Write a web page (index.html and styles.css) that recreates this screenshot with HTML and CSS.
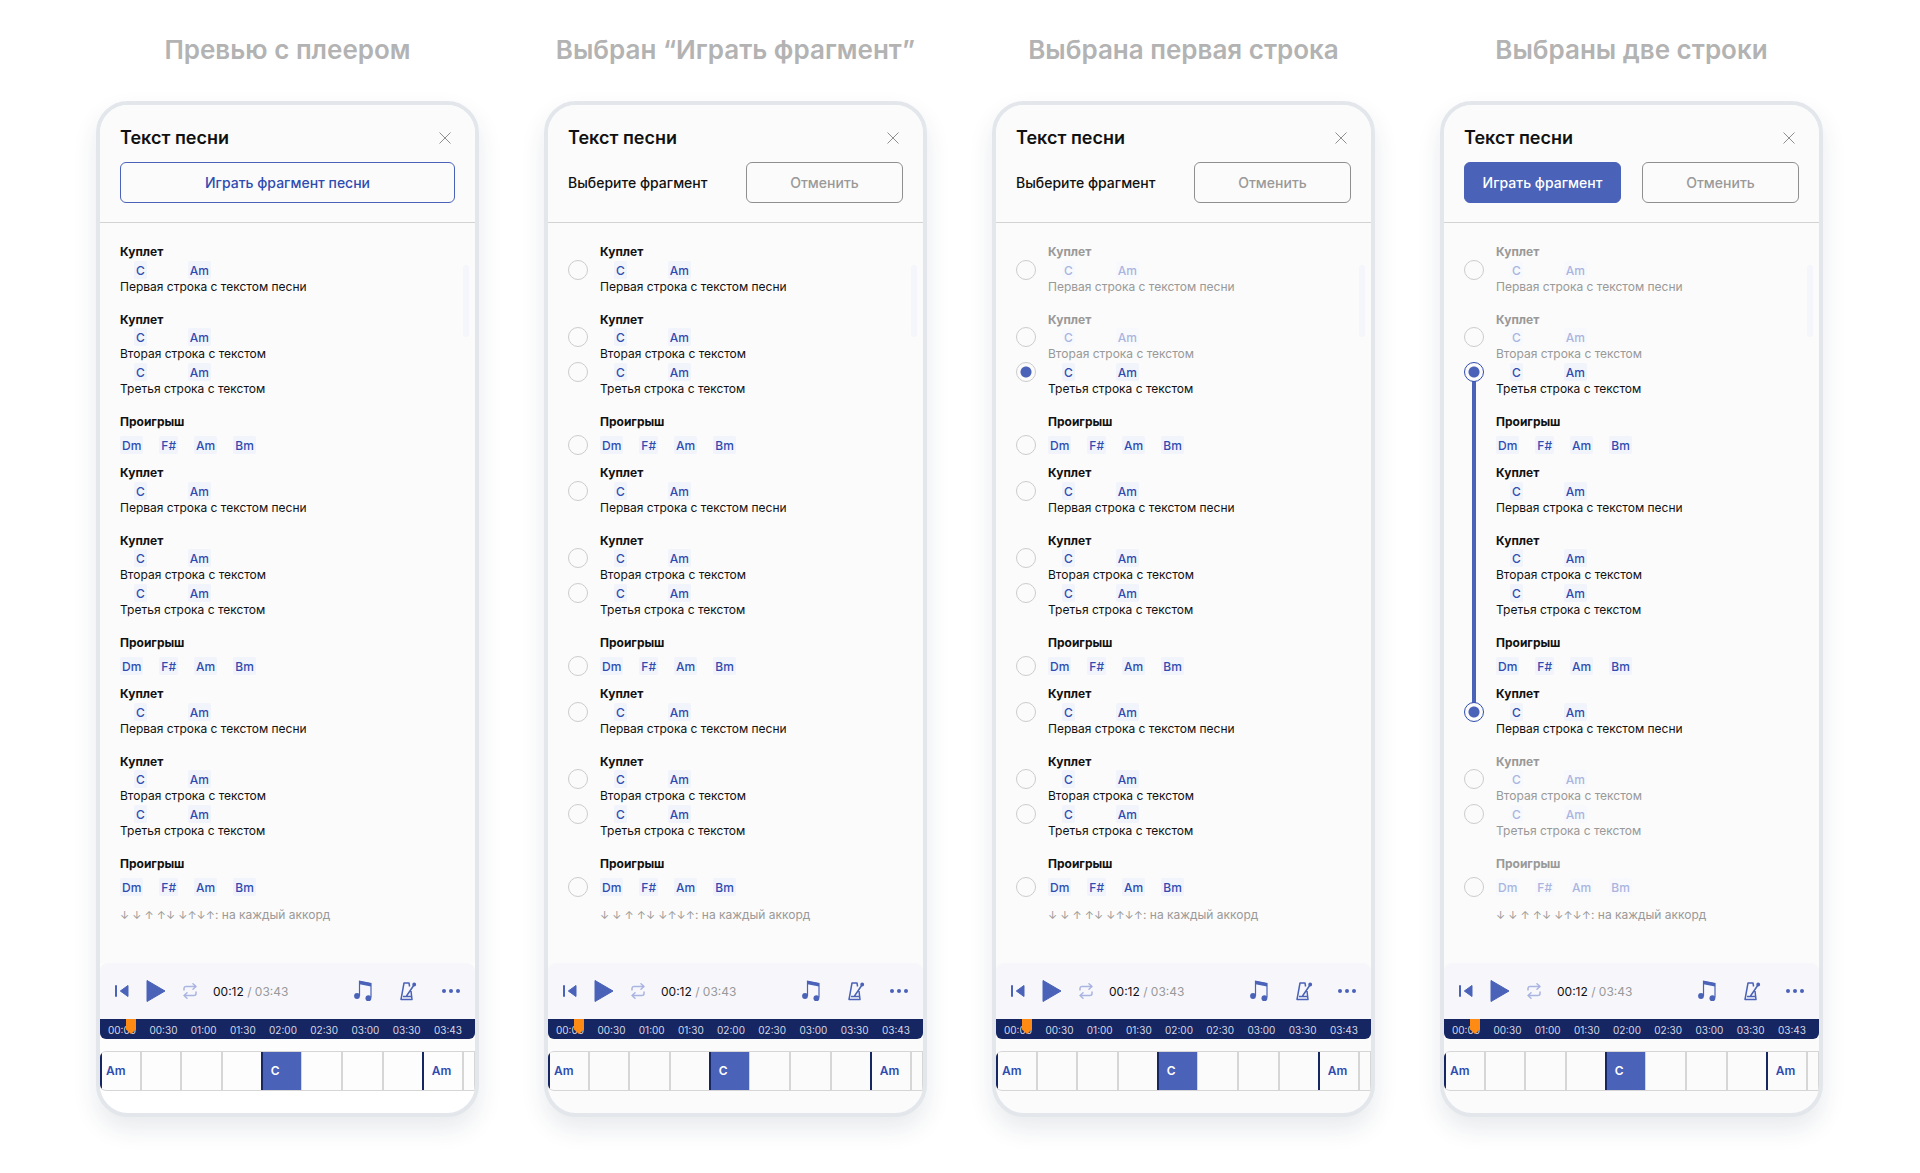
FILE: index.html
```html
<!DOCTYPE html>
<html lang="ru">
<head>
    <meta charset="UTF-8">
    <meta name="viewport" content="width=device-width, initial-scale=1.0">
    <title>Текст песни</title>
    <link rel="stylesheet" href="styles.css">
</head>
<body>
    <main class="board" id="board"></main>

    <template id="playerTemplate">
        <footer class="player">
            <div class="controls">
                <button type="button" class="icon-btn" aria-label="В начало">
                    <svg width="14" height="14" viewBox="0 0 14 14" fill="#4a62b8"><rect x="0" y="1" width="2" height="12" rx="1"/><path d="M13 1.500v11L5.300 7z" stroke="#4a62b8" stroke-linejoin="round"/></svg>
                </button>
                <button type="button" class="icon-btn" aria-label="Играть">
                    <svg width="20" height="24" viewBox="0 0 20 24" fill="#4a62b8"><path d="M1 1.500v21L19 12z" stroke="#4a62b8" stroke-linejoin="round"/></svg>
                </button>
                <button type="button" class="icon-btn" aria-label="Повтор">
                    <svg width="14" height="16" viewBox="0 0 14 16" fill="none" stroke="#a9b5e0" stroke-width="1.500" stroke-linecap="round" stroke-linejoin="round"><path d="M1 7V5.500a2 2 0 0 1 2-2h10M10 .8l3 2.700-3 2.700M13 9v1.500a2 2 0 0 1-2 2H1M4 15.200l-3-2.700 3-2.700"/></svg>
                </button>
                <span class="time">00:12 <span class="total">/ 03:43</span></span>
                <button type="button" class="icon-btn" aria-label="Ноты">
                    <svg width="18" height="22" viewBox="0 0 18 22" fill="#4a62b8"><path d="M5.500 16V1.200l11.500 2.300v14" fill="none" stroke="#4a62b8" stroke-width="1.200"/><path d="M5.500 1L17 3.300v3.200L5.500 4.200z"/><circle cx="3" cy="16" r="2.900"/><circle cx="14.400" cy="18.200" r="2.900"/></svg>
                </button>
                <button type="button" class="icon-btn" aria-label="Метроном">
                    <svg width="18" height="20" viewBox="0 0 18 20" fill="none" stroke="#4a62b8" stroke-width="1.500" stroke-linejoin="round"><path d="M12 10l1 8.500H2L5 2h5l.6 3.500M4 15.500h8M7.500 15L15 4"/><circle cx="15.200" cy="3.500" r="1.200" fill="#4a62b8"/></svg>
                </button>
                <button type="button" class="icon-btn" aria-label="Ещё">
                    <svg width="20" height="6" viewBox="0 0 20 6" fill="#4a62b8"><circle cx="3" cy="3" r="2"/><circle cx="10" cy="3" r="2"/><circle cx="17" cy="3" r="2"/></svg>
                </button>
            </div>
            <div class="timeline">
                <span>00:00</span><span>00:30</span><span>01:00</span><span>01:30</span><span>02:00</span><span>02:30</span><span>03:00</span><span>03:30</span><span>03:43</span>
                <svg class="playhead" width="10" height="15" viewBox="0 0 10 15"><path d="M0 0h10v10.500L5 15 0 10.500z" fill="#ff8a14"/></svg>
            </div>
            <div class="beats">
                <div class="beat bar">Am</div>
                <div class="beat"></div>
                <div class="beat"></div>
                <div class="beat"></div>
                <div class="beat bar current">C</div>
                <div class="beat"></div>
                <div class="beat"></div>
                <div class="beat"></div>
                <div class="beat bar">Am</div>
                <div class="beat"></div>
            </div>
        </footer>
    </template>

    <script src="script.js"></script>
</body>
</html>
```

FILE: styles.css
```css
* {
    box-sizing: border-box;
}
body {
    margin: 0;
    background-color: #fff;
    color: #111;
    font-family: Inter, "Noto Sans", sans-serif;
    font-size: 12px;
    line-height: 17px;
}
button {
    font-family: inherit;
    cursor: pointer;
}
.board {
    display: grid;
    grid-template-columns: repeat(4, 1fr);
    gap: 65px;
    padding: 32px 97px 56px 96px;
}
.caption {
    margin: 0 0 33px;
    color: #b3b3b3;
    font-size: 26px;
    font-weight: 600;
    line-height: 36px;
    text-align: center;
    white-space: nowrap;
}
.phone {
    overflow: hidden;
    padding-bottom: 22px;
    background-color: #fbfbfb;
    border: 4px solid #e3e7ec;
    border-radius: 32px;
    box-shadow: 0 12px 24px rgba(30, 45, 80, 0.1);
}
.phone.preview {
    background-color: #fff;
}

/* header */
.header {
    padding: 21px 20px 19px;
    background-color: #fbfbfb;
    border-bottom: 1px solid #d3d3d3;
}
.title-row {
    display: flex;
    align-items: center;
    justify-content: space-between;
    margin-bottom: 12px;
}
.title {
    margin: 0;
    font-size: 18px;
    font-weight: 600;
    line-height: 24px;
}
.close {
    display: flex;
    padding: 4px;
    background: none;
    border: none;
}
.actions {
    display: grid;
    grid-template-columns: 1fr 1fr;
    align-items: center;
    gap: 21px;
}
.hint {
    font-size: 14px;
    font-weight: 500;
    white-space: nowrap;
}
.btn {
    height: 41px;
    padding: 0;
    background: none;
    border: 1px solid #4a62b8;
    border-radius: 6px;
    color: #2f4cb0;
    font-size: 14px;
    font-weight: 500;
}
.btn.wide {
    grid-column: 1 / 3;
}
.btn.filled {
    background-color: #4a62b8;
    color: #fff;
}
.btn.cancel {
    border-color: #8f8f8f;
    color: #999;
}

/* lyrics */
.lyrics {
    position: relative;
    padding: 20px 20px 39px;
    background-color: #fbfbfb;
}
.scrollbar {
    position: absolute;
    top: 42px;
    right: 6px;
    width: 6px;
    height: 72px;
    background-color: #f5f6fb;
    border-radius: 3px;
}
.part {
    margin-bottom: 15px;
}
.part.interlude {
    margin-bottom: 10px;
}
.part h3 {
    margin: 0;
    font-size: 12px;
    font-weight: 700;
    line-height: 17px;
}
.short h3 {
    margin-bottom: 1px;
}
.interlude h3 {
    margin-bottom: 6px;
}
.selectable .part h3,
.selectable .strum {
    padding-left: 32px;
}
.line {
    display: flex;
    gap: 12px;
}
.line input {
    flex: none;
    width: 20px;
    height: 20px;
    margin: -1px 0;
    appearance: none;
    background-color: #fbfbfb;
    border: 1px solid #ccc;
    border-radius: 50%;
}
.line input:checked {
    background-image: radial-gradient(circle, #4a62b8 5px, transparent 6px);
}
.range .line input:checked {
    position: relative;
    z-index: 1;
    border-color: #2f4cb0;
}
.line input.between {
    opacity: 0;
}
.chords {
    display: flex;
    gap: 41px;
    height: 18px;
    padding-left: 14px;
}
.interlude .chords {
    gap: 16px;
    padding-left: 0;
}
.chord {
    padding: 0 2px;
    background-color: #f2f4fc;
    border-radius: 2px;
    color: #2f4cb0;
    font-weight: 500;
    line-height: 19px;
}
.text {
    margin: 0;
    padding-bottom: 2px;
    line-height: 15px;
}
.strum {
    margin: 0;
    color: #999;
}
.arrows {
    font-size: 11px;
}
.muted h3,
h3.muted,
.muted .text {
    color: #999;
}
.muted .chord {
    background-color: #f8f9fc;
    color: #a9b5e0;
}

/* bar that joins the first and the last selected line */
.line.joined {
    position: relative;
}
.link {
    position: absolute;
    top: 18px;
    left: 8px;
    width: 4px;
    height: 323px;
    background-color: #4a62b8;
}

/* player */
.player {
    background-color: #fdfdfd;
}
.selectable .player {
    background-color: #fbfbfb;
}
.controls {
    display: flex;
    align-items: center;
    height: 56px;
    padding: 0 14px 0 15px;
    background-color: #f7f7fb;
    border-radius: 8px 8px 0 0;
}
.icon-btn {
    display: flex;
    padding: 0;
    background: none;
    border: none;
}
.controls .icon-btn + .icon-btn {
    margin-left: 17px;
}
.controls .time {
    flex: 1;
    margin-left: 16px;
}
.controls .time ~ .icon-btn + .icon-btn {
    margin-left: 27px;
}
.controls .time ~ .icon-btn:last-child {
    margin-left: 24px;
}
.total {
    color: #999;
}
.timeline {
    position: relative;
    display: flex;
    justify-content: space-between;
    height: 20px;
    padding: 3px 13px 0 8px;
    background-color: #162663;
    border-radius: 0 0 6px 6px;
    color: #d5d8e5;
    font-size: 10px;
}
.playhead {
    position: absolute;
    top: 0;
    left: 26px;
}
.beats {
    display: grid;
    grid-template-columns: repeat(9, 10fr) 3fr;
    height: 40px;
    margin-top: 12px;
    border: solid #d6d6d6;
    border-width: 1px 1px 1px 0;
    border-radius: 6px 0 0 6px;
    overflow: hidden;
}
.beat {
    border-left: 2px solid #d6d6d6;
    color: #2f4cb0;
    font-weight: 600;
    line-height: 38px;
}
.beat.bar {
    padding-left: 8px;
    border-left-color: #162663;
}
.beat.bar:first-child {
    padding-left: 4px;
}
.beat.current {
    margin: -1px 0;
    background-color: #4a62b8;
    color: #fff;
    line-height: 40px;
}
.current + .beat {
    border-left-width: 1px;
}
```

FILE: script.js
```javascript
const screens = [
    { caption: 'Превью с плеером', mode: 'preview' },
    { caption: 'Выбран “Играть фрагмент”', mode: 'choose' },
    { caption: 'Выбрана первая строка', mode: 'first', from: 2 },
    { caption: 'Выбраны две строки', mode: 'range', from: 2, to: 8 }
];

const verse = [
    { title: 'Куплет', lines: ['Первая строка с текстом песни'] },
    { title: 'Куплет', lines: ['Вторая строка с текстом', 'Третья строка с текстом'] },
    { title: 'Проигрыш', chords: ['Dm', 'F#', 'Am', 'Bm'] }
];
const song = [...verse, ...verse, ...verse];

function renderActions(mode) {
    const cancel = '<button type="button" class="btn cancel">Отменить</button>';
    if (mode === 'preview') {
        return '<button type="button" class="btn wide">Играть фрагмент песни</button>';
    }
    if (mode === 'range') {
        return '<button type="button" class="btn filled">Играть фрагмент</button>' + cancel;
    }
    return '<span class="hint">Выберите фрагмент</span>' + cancel;
}

function renderLyrics(screen) {
    const from = screen.from || 0;
    const last = screen.to || Infinity;
    let index = 0;

    return song.map(part => {
        const rows = part.lines || [''];
        const titleMuted = index < from || index > last;
        const lines = rows.map(text => {
            const i = index++;
            const muted = i < from || i > last;
            const checked = screen.from === i || screen.to === i;
            const joined = screen.to && screen.from === i;
            const between = screen.to && i > from && i < last;
            const chords = (part.chords || ['C', 'Am']).map(c => `<span class="chord">${c}</span>`).join('');
            const input = screen.mode === 'preview' ? '' :
                `<input type="checkbox" class="${between ? 'between' : ''}" aria-label="${text || part.title}" ${checked ? 'checked' : ''}>`;
            return `<div class="line ${muted ? 'muted' : ''} ${joined ? 'joined' : ''}">
                ${joined ? '<span class="link"></span>' : ''}${input}
                <div><div class="chords">${chords}</div>${text ? `<p class="text">${text}</p>` : ''}</div>
            </div>`;
        }).join('');
        const kind = part.chords ? 'interlude' : rows.length === 1 ? 'short' : '';
        return `<section class="part ${kind}">
            <h3 class="${titleMuted ? 'muted' : ''}">${part.title}</h3>${lines}
        </section>`;
    }).join('');
}

const board = document.getElementById('board');
const player = document.getElementById('playerTemplate').innerHTML;

board.innerHTML = screens.map(screen => `
    <div class="screen">
        <h1 class="caption">${screen.caption}</h1>
        <article class="phone ${screen.mode} ${screen.mode === 'preview' ? '' : 'selectable'}">
            <header class="header">
                <div class="title-row">
                    <h2 class="title">Текст песни</h2>
                    <button type="button" class="close" aria-label="Закрыть">
                        <svg width="12" height="12" viewBox="0 0 12 12" stroke="#8f8f8f"><path d="M.5.5l11 11M11.500.5l-11 11"/></svg>
                    </button>
                </div>
                <div class="actions">${renderActions(screen.mode)}</div>
            </header>
            <div class="lyrics">
                ${renderLyrics(screen)}
                <p class="strum"><span class="arrows">↓ ↓ ↑ ↑↓ ↓↑↓↑</span>: на каждый аккорд</p>
                <div class="scrollbar"></div>
            </div>
            ${player}
        </article>
    </div>
`).join('');
```
